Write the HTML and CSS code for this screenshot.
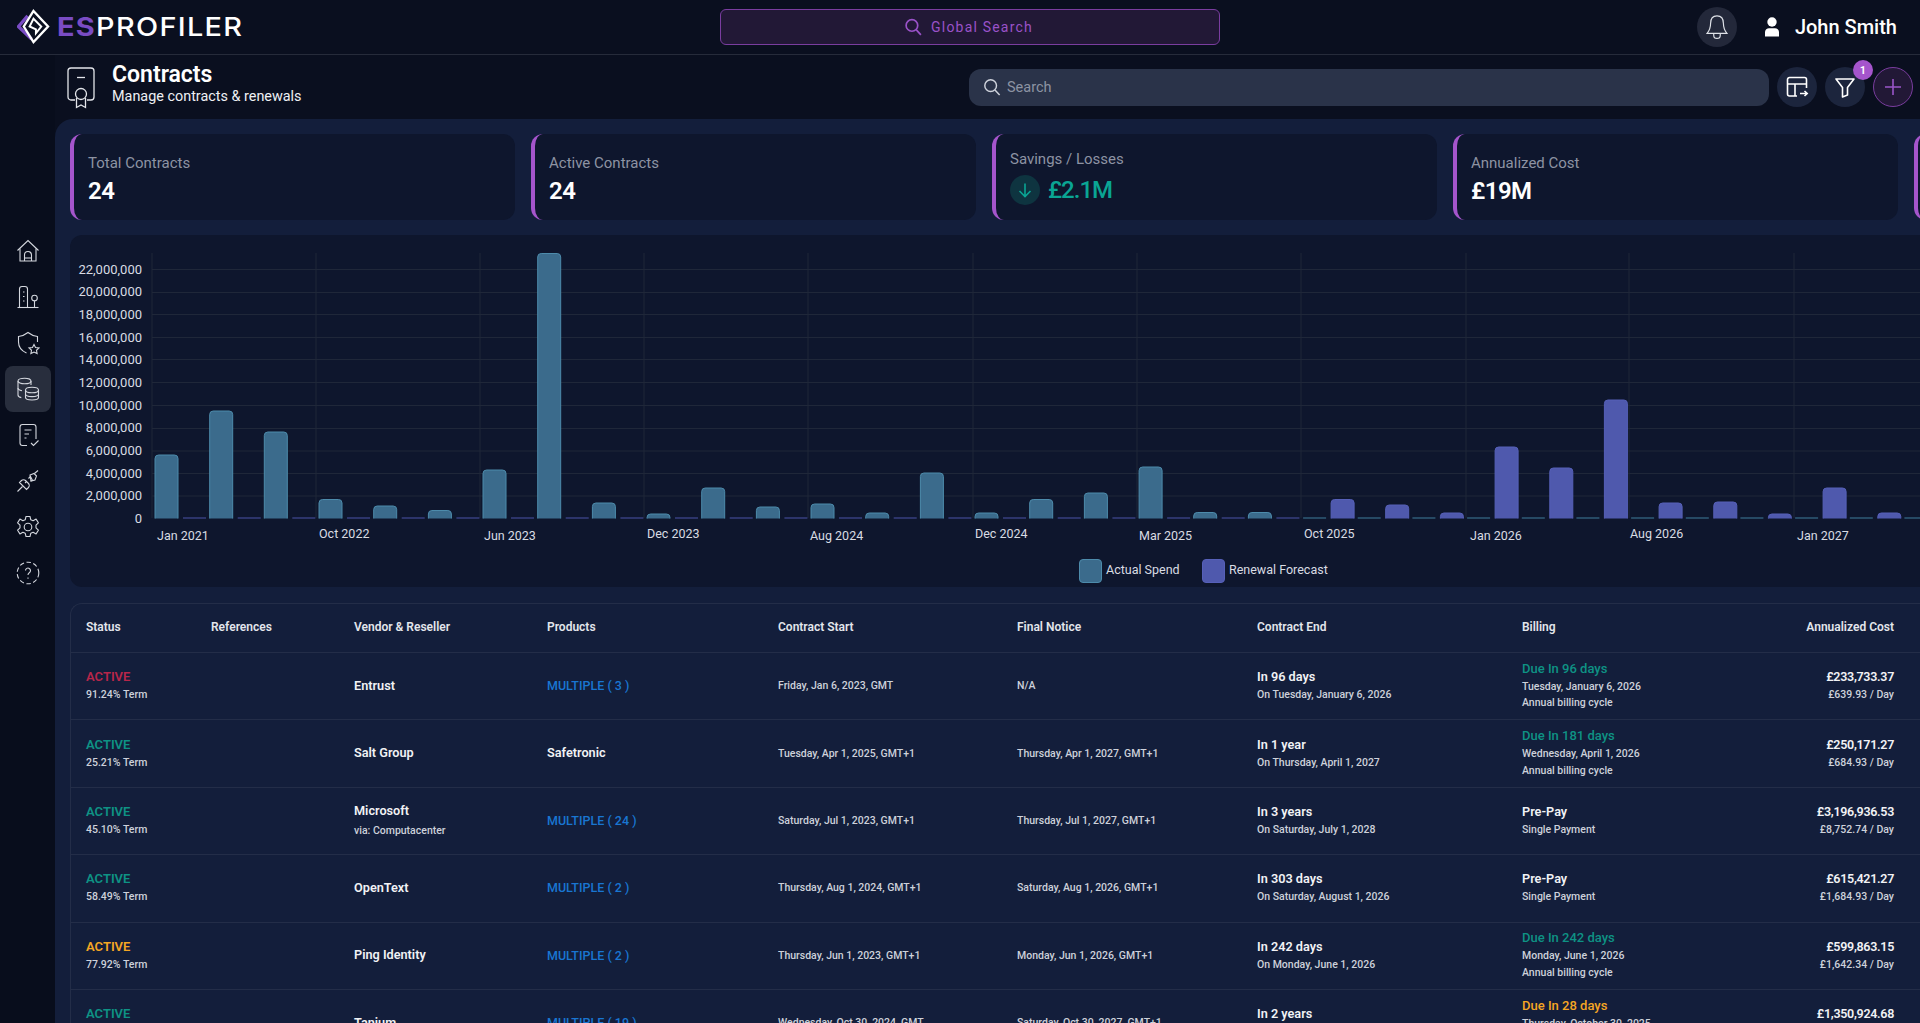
FILE: index.html
```html
<!DOCTYPE html>
<html lang="en">
<head>
<meta charset="utf-8">
<title>Contracts</title>
<link rel="stylesheet" href="styles.css">
</head>
<body>
<header class="topbar">
  <div class="brand">
    <svg class="brand-mark" viewBox="0 0 34 36" fill="none">
      <path d="M11 7 L1.500 18 L15 31" stroke="#7a4cc4" stroke-width="3.400" fill="none"/>
      <path d="M17 2 L32 18 L17 34 L7 18 Z" stroke="#fff" stroke-width="2.400" stroke-linejoin="miter"/>
      <path d="M17 10 L25 18 L19.500 25 V21 L13 18 Z" stroke="#fff" stroke-width="2"/>
    </svg>
    <span class="brand-name"><span class="brand-es">ES</span>PROFILER</span>
  </div>
  <div class="global-search">
    <svg class="gs-icon" viewBox="0 0 18 18" fill="none" stroke="currentColor" stroke-width="1.600"><circle cx="7.500" cy="7.500" r="5.500"/><path d="M11.500 11.500 L16 16.500"/></svg>
    <span>Global Search</span>
  </div>
  <div class="topbar-right">
    <div class="bell">
      <svg viewBox="0 0 24 24" width="28" height="28" fill="none" stroke="#dfe2e8" stroke-width="1"><path d="M12 2.500c-3.800 0-5.500 3-5.500 6.500 0 4-1 6-3 8.500h17c-2-2.500-3-4.500-3-8.500 0-3.500-1.700-6.500-5.500-6.500z"/><path d="M9.200 17.500v1.500a2.800 2.800 0 0 0 5.600 0v-1.500"/></svg>
    </div>
    <svg class="user-icon" viewBox="0 0 16 20" fill="#fff"><ellipse cx="8" cy="5" rx="4.700" ry="4.700"/><path d="M1 19.500v-4.500c0-2.500 2-3.800 4-3.800h6c2 0 4 1.300 4 3.800v4.500z"/></svg>
    <span class="user-name">John Smith</span>
  </div>
</header>

<div class="shell">
  <aside class="sidebar">
    <div class="nav-item">
      <svg viewBox="0 0 24 24"><path d="M1.500 11.500 L12 1.500 L22.500 11.500"/><path d="M4 9.500V22h16V9.500"/><path d="M8.500 22v-6a3.500 3.500 0 0 1 7 0v6"/><path d="M8.500 19h7"/></svg>
    </div>
    <div class="nav-item">
      <svg viewBox="0 0 24 24"><path d="M1.500 22.500h21"/><path d="M3.500 22.500V4a2.500 2.500 0 0 1 2.500-2.500h3A2.500 2.500 0 0 1 11.500 4v18.500"/><path d="M7 7h1.500M7 11.500h1.500M7 16h1.500"/><circle cx="18.500" cy="13" r="2.800"/><path d="M18.500 15.800v6.700"/></svg>
    </div>
    <div class="nav-item">
      <svg viewBox="0 0 24 24"><path d="M21.500 11V5.500C17.500 5 14.500 3.500 12 1.500 9.500 3.500 6.500 5 2.500 5.500V11c0 5 3.500 9 8 11"/><path d="M18 13.500l1.500 3 3.500.500-2.500 2.300.600 3.300-3.100-1.600-3.100 1.600.600-3.300-2.500-2.300 3.500-.500z"/></svg>
    </div>
    <div class="nav-item nav-active">
      <svg viewBox="0 0 24 24"><ellipse cx="8.500" cy="4" rx="6.500" ry="2.800"/><path d="M2 4v14c0 1.300 1.400 2.300 3.300 2.600"/><path d="M15 4v4"/><path d="M2 11c0 1.300 1.500 2.300 4 2.700"/><ellipse cx="16" cy="13" rx="6.500" ry="2.800"/><path d="M9.500 13v7.500c0 1.600 3 2.500 6.500 2.500s6.500-.9 6.500-2.500V13"/><path d="M9.500 17c0 1.500 3 2.600 6.500 2.600s6.500-1.100 6.500-2.600"/></svg>
    </div>
    <div class="nav-item">
      <svg viewBox="0 0 24 24"><path d="M11 22.500H6.500A2.500 2.500 0 0 1 4 20V4a2.500 2.500 0 0 1 2.500-2.500h11A2.500 2.500 0 0 1 20 4v12"/><path d="M8.500 7h7M8.500 11h4.500M8.500 15h2"/><path d="M15 20l2.500 2.500 5-5"/></svg>
    </div>
    <div class="nav-item">
      <svg viewBox="0 0 24 24"><path d="M1.500 22.500l5-5"/><path d="M3.500 13.500l7 7 2-2c1-1 1-3 0-4l-3-3c-1-1-3-1-4 0z"/><path d="M9 14l1.500-1.500"/><path d="M12.500 9.500l2-2 2 4-2 .500"/><path d="M14 6l4-1.500 2.500 2.500-1.500 4-4 1z"/><path d="M18.500 4.500L22 1.500"/></svg>
    </div>
    <div class="nav-item">
      <svg viewBox="0 0 24 24"><circle cx="12" cy="12" r="3.800"/><path d="M10 1.500h4l.8 3.300 2.300 1 3-1.700 2.300 3.700-2.400 2.400v2.600l2.400 2.400-2.300 3.700-3-1.700-2.300 1-.8 3.300h-4l-.8-3.300-2.300-1-3 1.700-2.300-3.700 2.400-2.400v-2.600L1.600 7.800l2.300-3.700 3 1.700 2.300-1z" stroke-linejoin="round"/></svg>
    </div>
    <div class="nav-item">
      <svg viewBox="0 0 24 24"><circle cx="12" cy="12" r="10.800" stroke-dasharray="4.500 2.500"/><path d="M9.500 9.500a2.500 2.500 0 1 1 3.800 2.200c-.9.600-1.300 1.100-1.300 2.300"/><path d="M12 16.500v1.200"/></svg>
    </div>
  </aside>

  <div class="content">
    <section class="page-head">
      <svg class="page-icon" viewBox="0 0 28 42" fill="none" stroke="#e3e5ea" stroke-width="1.300">
        <path d="M8 33H4a3 3 0 0 1-3-3V4a3 3 0 0 1 3-3h20a3 3 0 0 1 3 3v26a3 3 0 0 1-3 3h-4"/>
        <path d="M10 10.500h8"/>
        <circle cx="14" cy="27" r="5.500"/>
        <path d="M9.500 31v9.500l4.500-2.500 4.500 2.500V31"/>
      </svg>
      <div class="page-title">
        <h1>Contracts</h1>
        <p>Manage contracts &amp; renewals</p>
      </div>
      <div class="tools">
        <div class="search">
          <svg viewBox="0 0 20 20" fill="none" stroke="#cfd3dc" stroke-width="1.600"><circle cx="8.500" cy="8.500" r="6.500"/><path d="M13.300 13.300L18.500 19"/></svg>
          <span>Search</span>
        </div>
        <div class="round-btn">
          <svg viewBox="0 0 24 24" width="24" height="24" fill="none" stroke="#fff" stroke-width="1.600"><path d="M12 21H4.500A2 2 0 0 1 2.500 19V4.500a2 2 0 0 1 2-2h15a2 2 0 0 1 2 2V13"/><path d="M2.500 9h19M10 9v12"/><path d="M15 18.500h7M19.500 16l2.700 2.500-2.700 2.500"/></svg>
        </div>
        <div class="round-btn filter-btn">
          <svg viewBox="0 0 24 24" width="24" height="24" fill="none" stroke="#fff" stroke-width="1.600"><path d="M3 4h18l-6.500 8.500V20l-5 2v-9.500z" stroke-linejoin="round"/></svg>
          <span class="badge">1</span>
        </div>
        <div class="round-btn add-btn">
          <svg viewBox="0 0 20 20" width="20" height="20" fill="none" stroke="#9a55c9" stroke-width="1.600"><path d="M10 2v16M2 10h16"/></svg>
        </div>
      </div>
    </section>

    <main class="panel">
      <section class="stats">
        <div class="stat"><div class="stat-label">Total Contracts</div><div class="stat-value">24</div></div>
        <div class="stat"><div class="stat-label">Active Contracts</div><div class="stat-value">24</div></div>
        <div class="stat stat-raised">
          <div class="stat-label">Savings / Losses</div>
          <div class="stat-value stat-good">
            <span class="arrow"><svg viewBox="0 0 16 16" width="16" height="16" fill="none" stroke="#0aa594" stroke-width="1.600"><path d="M8 1.500v13M2.500 9L8 14.500 13.500 9"/></svg></span>£2.1M
          </div>
        </div>
        <div class="stat"><div class="stat-label">Annualized Cost</div><div class="stat-value">£19M</div></div>
        <div class="stat"></div>
      </section>

      <section class="chart-card">
        <svg class="chart" viewBox="70 235 1850 352" width="1850" height="352">
          <defs><clipPath id="plot"><rect x="70" y="235" width="1850" height="283.500"/></clipPath></defs>
          <g class="grid">
            <path d="M152 253V518M316 253V518M480 253V518M644 253V518M808 253V518M973 253V518M1137 253V518M1301 253V518M1466 253V518M1629 253V518M1794 253V518"/>
            <path d="M152 269.500H1920M152 292.500H1920M152 314.500H1920M152 337.500H1920M152 359.500H1920M152 382.500H1920M152 405.500H1920M152 428.500H1920M152 451H1920M152 473.500H1920M152 496H1920"/>
          </g>
          <g class="axis-y">
            <text x="142" y="273.500">22,000,000</text><text x="142" y="296">20,000,000</text><text x="142" y="319">18,000,000</text><text x="142" y="341.500">16,000,000</text><text x="142" y="364">14,000,000</text><text x="142" y="387">12,000,000</text><text x="142" y="409.500">10,000,000</text><text x="142" y="432">8,000,000</text><text x="142" y="455">6,000,000</text><text x="142" y="477.500">4,000,000</text><text x="142" y="500">2,000,000</text><text x="142" y="523">0</text>
          </g>
          <g class="axis-x">
            <text x="157" y="540">Jan 2021</text><text x="319" y="538">Oct 2022</text><text x="484" y="540">Jun 2023</text><text x="647" y="538">Dec 2023</text><text x="810" y="540">Aug 2024</text><text x="975" y="538">Dec 2024</text><text x="1139" y="540">Mar 2025</text><text x="1304" y="538">Oct 2025</text><text x="1470" y="540">Jan 2026</text><text x="1630" y="538">Aug 2026</text><text x="1797" y="540">Jan 2027</text>
          </g>
          <g clip-path="url(#plot)">
            <g class="bar-actual">
              <rect x="155" y="455" width="23" height="70" rx="3.500"/><rect x="209.700" y="411" width="23" height="114" rx="3.500"/><rect x="264.300" y="432" width="23" height="93" rx="3.500"/><rect x="319" y="499.500" width="23" height="26" rx="3.500"/><rect x="373.700" y="506" width="23" height="19" rx="3.500"/><rect x="428.400" y="510.500" width="23" height="14" rx="3.500"/><rect x="483" y="470" width="23" height="55" rx="3.500"/><rect x="537.700" y="253.500" width="23" height="272" rx="3.500"/><rect x="592.400" y="503" width="23" height="22" rx="3.500"/><rect x="647" y="514" width="23" height="11" rx="3.500"/><rect x="701.700" y="488" width="23" height="37" rx="3.500"/><rect x="756.400" y="507" width="23" height="18" rx="3.500"/><rect x="811" y="504" width="23" height="21" rx="3.500"/><rect x="865.700" y="513" width="23" height="12" rx="3.500"/><rect x="920.400" y="473" width="23" height="52" rx="3.500"/><rect x="975" y="513" width="23" height="12" rx="3.500"/><rect x="1029.700" y="499.500" width="23" height="26" rx="3.500"/><rect x="1084.400" y="493" width="23" height="32" rx="3.500"/><rect x="1139.100" y="467" width="23" height="58" rx="3.500"/><rect x="1193.700" y="512.500" width="23" height="12" rx="3.500"/><rect x="1248.400" y="512.500" width="23" height="12" rx="3.500"/>
            </g>
            <g class="tiny-actual">
              <rect x="1303.100" y="517.500" width="23" height="2"/><rect x="1357.700" y="517.500" width="23" height="2"/><rect x="1412.400" y="517.500" width="23" height="2"/><rect x="1467.100" y="517.500" width="23" height="2"/><rect x="1521.800" y="517.500" width="23" height="2"/><rect x="1576.400" y="517.500" width="23" height="2"/><rect x="1631.100" y="517.500" width="23" height="2"/><rect x="1685.800" y="517.500" width="23" height="2"/><rect x="1740.400" y="517.500" width="23" height="2"/><rect x="1795.100" y="517.500" width="23" height="2"/><rect x="1849.800" y="517.500" width="23" height="2"/><rect x="1904.400" y="517.500" width="23" height="2"/>
            </g>
            <g class="tiny-forecast">
              <rect x="183" y="517.500" width="23" height="2"/><rect x="237.700" y="517.500" width="23" height="2"/><rect x="292.300" y="517.500" width="23" height="2"/><rect x="347" y="517.500" width="23" height="2"/><rect x="401.700" y="517.500" width="23" height="2"/><rect x="456.400" y="517.500" width="23" height="2"/><rect x="511" y="517.500" width="23" height="2"/><rect x="565.700" y="517.500" width="23" height="2"/><rect x="620.400" y="517.500" width="23" height="2"/><rect x="675" y="517.500" width="23" height="2"/><rect x="729.700" y="517.500" width="23" height="2"/><rect x="784.400" y="517.500" width="23" height="2"/><rect x="839" y="517.500" width="23" height="2"/><rect x="893.700" y="517.500" width="23" height="2"/><rect x="948.400" y="517.500" width="23" height="2"/><rect x="1003" y="517.500" width="23" height="2"/><rect x="1057.700" y="517.500" width="23" height="2"/><rect x="1112.400" y="517.500" width="23" height="2"/><rect x="1167.100" y="517.500" width="23" height="2"/><rect x="1221.700" y="517.500" width="23" height="2"/><rect x="1276.400" y="517.500" width="23" height="2"/>
            </g>
            <g class="bar-forecast">
              <rect x="1331.100" y="499.500" width="23" height="26" rx="3.500"/><rect x="1385.700" y="505" width="23" height="20" rx="3.500"/><rect x="1440.400" y="513" width="23" height="12" rx="3.500"/><rect x="1495.100" y="447" width="23" height="78" rx="3.500"/><rect x="1549.800" y="468" width="23" height="57" rx="3.500"/><rect x="1604.400" y="400" width="23" height="125" rx="3.500"/><rect x="1659.100" y="503" width="23" height="22" rx="3.500"/><rect x="1713.800" y="502" width="23" height="23" rx="3.500"/><rect x="1768.400" y="514" width="23" height="11" rx="3.500"/><rect x="1823.100" y="488" width="23" height="37" rx="3.500"/><rect x="1877.800" y="513" width="23" height="12" rx="3.500"/>
            </g>
          </g>
          <g class="legend">
            <rect class="swatch-actual" x="1079.500" y="559.500" width="22" height="23" rx="3.500"/>
            <text x="1106" y="574">Actual Spend</text>
            <rect class="swatch-forecast" x="1202.500" y="559.500" width="22" height="23" rx="3.500"/>
            <text x="1229" y="574">Renewal Forecast</text>
          </g>
        </svg>
      </section>

      <section class="table">
        <div class="row row-head">
          <div>Status</div><div>References</div><div>Vendor &amp; Reseller</div><div>Products</div><div>Contract Start</div><div>Final Notice</div><div>Contract End</div><div>Billing</div><div class="num">Annualized Cost</div>
        </div>

        <div class="row">
          <div><div class="status red">ACTIVE</div><div class="sub">91.24% Term</div></div>
          <div></div>
          <div class="strong">Entrust</div>
          <div class="link">MULTIPLE ( 3 )</div>
          <div class="date">Friday, Jan 6, 2023, GMT</div>
          <div class="date">N/A</div>
          <div><div class="strong">In 96 days</div><div class="sub">On Tuesday, January 6, 2026</div></div>
          <div class="billing"><div class="due teal">Due In 96 days</div><div class="sub">Tuesday, January 6, 2026</div><div class="sub">Annual billing cycle</div></div>
          <div class="num"><div class="strong cost">£233,733.37</div><div class="sub">£639.93 / Day</div></div>
        </div>

        <div class="row">
          <div><div class="status teal">ACTIVE</div><div class="sub">25.21% Term</div></div>
          <div></div>
          <div class="strong">Salt Group</div>
          <div class="strong">Safetronic</div>
          <div class="date">Tuesday, Apr 1, 2025, GMT+1</div>
          <div class="date">Thursday, Apr 1, 2027, GMT+1</div>
          <div><div class="strong">In 1 year</div><div class="sub">On Thursday, April 1, 2027</div></div>
          <div class="billing"><div class="due teal">Due In 181 days</div><div class="sub">Wednesday, April 1, 2026</div><div class="sub">Annual billing cycle</div></div>
          <div class="num"><div class="strong cost">£250,171.27</div><div class="sub">£684.93 / Day</div></div>
        </div>

        <div class="row">
          <div><div class="status teal">ACTIVE</div><div class="sub">45.10% Term</div></div>
          <div></div>
          <div class="vendor"><div class="strong">Microsoft</div><div class="sub">via: Computacenter</div></div>
          <div class="link">MULTIPLE ( 24 )</div>
          <div class="date">Saturday, Jul 1, 2023, GMT+1</div>
          <div class="date">Thursday, Jul 1, 2027, GMT+1</div>
          <div><div class="strong">In 3 years</div><div class="sub">On Saturday, July 1, 2028</div></div>
          <div><div class="strong">Pre-Pay</div><div class="sub">Single Payment</div></div>
          <div class="num"><div class="strong cost">£3,196,936.53</div><div class="sub">£8,752.74 / Day</div></div>
        </div>

        <div class="row">
          <div><div class="status teal">ACTIVE</div><div class="sub">58.49% Term</div></div>
          <div></div>
          <div class="strong">OpenText</div>
          <div class="link">MULTIPLE ( 2 )</div>
          <div class="date">Thursday, Aug 1, 2024, GMT+1</div>
          <div class="date">Saturday, Aug 1, 2026, GMT+1</div>
          <div><div class="strong">In 303 days</div><div class="sub">On Saturday, August 1, 2026</div></div>
          <div><div class="strong">Pre-Pay</div><div class="sub">Single Payment</div></div>
          <div class="num"><div class="strong cost">£615,421.27</div><div class="sub">£1,684.93 / Day</div></div>
        </div>

        <div class="row">
          <div><div class="status amber">ACTIVE</div><div class="sub">77.92% Term</div></div>
          <div></div>
          <div class="strong">Ping Identity</div>
          <div class="link">MULTIPLE ( 2 )</div>
          <div class="date">Thursday, Jun 1, 2023, GMT+1</div>
          <div class="date">Monday, Jun 1, 2026, GMT+1</div>
          <div><div class="strong">In 242 days</div><div class="sub">On Monday, June 1, 2026</div></div>
          <div class="billing"><div class="due teal">Due In 242 days</div><div class="sub">Monday, June 1, 2026</div><div class="sub">Annual billing cycle</div></div>
          <div class="num"><div class="strong cost">£599,863.15</div><div class="sub">£1,642.34 / Day</div></div>
        </div>

        <div class="row">
          <div><div class="status teal">ACTIVE</div><div class="sub">61.10% Term</div></div>
          <div></div>
          <div class="strong">Tanium</div>
          <div class="link">MULTIPLE ( 19 )</div>
          <div class="date">Wednesday, Oct 30, 2024, GMT</div>
          <div class="date">Saturday, Oct 30, 2027, GMT+1</div>
          <div><div class="strong">In 2 years</div><div class="sub">On Saturday, October 30, 2027</div></div>
          <div class="billing"><div class="due amber">Due In 28 days</div><div class="sub">Thursday, October 30, 2025</div><div class="sub">Annual billing cycle</div></div>
          <div class="num"><div class="strong cost">£1,350,924.68</div><div class="sub">£3,701.17 / Day</div></div>
        </div>
      </section>
    </main>
  </div>
</div>
</body>
</html>
```

FILE: styles.css
```css
* { box-sizing: border-box; }
html, body { margin: 0; height: 100%; overflow: hidden; }
body {
  display: flex;
  flex-direction: column;
  background: #0a0f1f;
  color: #fff;
  font-family: Roboto, "Open Sans", sans-serif;
}
p, h1 { margin: 0; }

/* top bar */
.topbar {
  flex: none;
  height: 55px;
  display: flex;
  align-items: center;
  border-bottom: 1px solid #262b3a;
  padding: 0 23px 1px 17px;
}
.brand { display: flex; align-items: center; gap: 7px; width: 703px; }
.brand-mark { width: 33px; height: 35px; flex: none; }
.brand-name {
  font-family: Inter, sans-serif;
  font-size: 26px;
  font-weight: 500;
  letter-spacing: 1.2px;
  line-height: 30px;
  transform: scaleX(1.11);
  transform-origin: left center;
}
.brand-es { color: #7a4cc4; font-weight: 700; }
.global-search {
  width: 500px;
  height: 36px;
  display: flex;
  align-items: center;
  justify-content: center;
  gap: 8px;
  padding-right: 3px;
  background: #221836;
  border: 1px solid #7a3d9f;
  border-radius: 6px;
  color: #9a52c8;
  font-size: 14px;
  letter-spacing: 1.2px;
}
.gs-icon { width: 19px; height: 20px; }
.topbar-right { margin-left: auto; display: flex; align-items: center; }
.bell {
  width: 40px;
  height: 40px;
  border-radius: 50%;
  background: #23283a;
  display: flex;
  align-items: center;
  justify-content: center;
}
.user-icon { width: 16px; height: 20px; margin-left: 27px; }
.user-name { margin-left: 15px; font-size: 20px; font-weight: 500; line-height: 24px; }

/* shell */
.shell { flex: 1; min-height: 0; display: flex; }
.sidebar {
  flex: none;
  width: 55px;
  padding: 173px 0 0 5px;
  background: #080d1c;
  display: flex;
  flex-direction: column;
}
.nav-item {
  width: 46px;
  height: 46px;
  display: flex;
  align-items: center;
  justify-content: center;
  border-radius: 8px;
}
.nav-item svg {
  width: 24px;
  height: 24px;
  fill: none;
  stroke: #d4d7de;
  stroke-width: 1.1;
}
.nav-active { background: #282e3d; }
.content { flex: 1; min-width: 0; display: flex; flex-direction: column; }

/* page head */
.page-head {
  flex: none;
  height: 64px;
  display: flex;
  align-items: center;
  padding: 0 7px 0 12px;
}
.page-icon { width: 28px; height: 42px; flex: none; margin-top: 2px; }
.page-title { margin: 0 0 8px 17px; }
.page-title h1 { font-size: 23px; font-weight: 600; line-height: 27px; }
.page-title p { font-size: 14.400px; line-height: 18px; color: #eef0f4; }
.tools { margin-left: auto; display: flex; align-items: center; gap: 8px; }
.search {
  width: 800px;
  height: 37px;
  display: flex;
  align-items: center;
  gap: 6px;
  padding-left: 14px;
  background: #2a3349;
  border-radius: 12px;
  color: #8d93a3;
  font-size: 14.500px;
}
.search svg { width: 18px; height: 20px; }
.round-btn {
  width: 40px;
  height: 40px;
  border-radius: 50%;
  background: #1c253d;
  display: flex;
  align-items: center;
  justify-content: center;
  position: relative;
}
.add-btn { background: #221836; border: 1px solid #7a3d9f; }
.badge {
  position: absolute;
  top: -7px;
  right: -8px;
  width: 20px;
  height: 20px;
  border-radius: 50%;
  background: #a555cc;
  color: #fff;
  font-size: 11px;
  font-weight: 600;
  display: flex;
  align-items: center;
  justify-content: center;
}

/* panel */
.panel {
  flex: 1;
  min-height: 0;
  overflow: hidden;
  background: #131e3b;
  border-top-left-radius: 18px;
  padding: 15px 0 0 15px;
}
.stats { display: flex; gap: 16px; height: 86px; }
.stat {
  flex: none;
  width: 445px;
  background: #0e162d;
  border-left: 4px solid #a555cc;
  border-radius: 12px;
  padding: 20px 0 0 14px;
}
.stat-raised { padding-top: 16px; }
.stat-label { font-size: 15px; line-height: 18px; color: #8d93a3; }
.stat-value {
  margin-top: 5px;
  font-size: 24px;
  font-weight: 600;
  line-height: 28px;
  letter-spacing: -.5px;
  display: flex;
  align-items: center;
}
.stat-raised .stat-value { margin-top: 7px; }
.stat-good { color: #0aa594; font-weight: 500; letter-spacing: -1px; }
.arrow {
  width: 30px;
  height: 30px;
  border-radius: 50%;
  background: #0e3440;
  display: flex;
  align-items: center;
  justify-content: center;
  margin-right: 8px;
}

/* chart */
.chart-card {
  margin-top: 15px;
  height: 352px;
  background: #0e162d;
  border-radius: 12px 0 0 12px;
  overflow: hidden;
}
.chart { display: block; }
.grid path { stroke: #1f2739; stroke-width: 1; fill: none; }
.axis-y text { text-anchor: end; font-size: 13px; fill: #d9dce3; }
.axis-x text { font-size: 12.500px; fill: #d9dce3; }
.legend text { font-size: 12.500px; fill: #d9dce3; }
.bar-actual rect, .swatch-actual { fill: #3b6b8c; stroke: #4d8bab; stroke-width: 1; }
.bar-forecast rect, .swatch-forecast { fill: #4f59ad; stroke: #5660b8; stroke-width: 1; }
.tiny-actual rect { fill: #3f7c9c; }
.tiny-forecast rect { fill: #4a52a8; }

/* table */
.table {
  margin-top: 16px;
  background: #131e3b;
  border: 1px solid #232d48;
  border-right: 0;
  border-bottom: 0;
  border-top-left-radius: 12px;
}
.row {
  display: grid;
  grid-template-columns: 125px 143px 193px 231px 239px 240px 265px 1fr auto;
  align-items: center;
  height: 67.400px;
  padding: 0 26px 1px 15px;
  border-bottom: 1px solid #232d48;
  font-size: 11px;
  color: #d9dce3;
}
.row-head {
  height: 49px;
  padding-bottom: 2px;
  font-size: 12px;
  font-weight: 600;
  color: #e3e6ec;
}
.num { text-align: right; }
.strong { font-size: 12.700px; font-weight: 600; line-height: 18px; color: #f1f2f5; }
.cost { font-size: 12.500px; letter-spacing: -.3px; }
.sub { font-size: 10.500px; font-weight: 500; line-height: 16px; margin-top: 1px; color: #cdd1da; }
.status { font-size: 13px; font-weight: 600; line-height: 18px; }
.vendor .sub { margin-top: 3px; }
.link { font-size: 12.500px; font-weight: 500; color: #1976d2; }
.date { font-size: 10.500px; font-weight: 500; color: #cdd1da; }
.due { font-size: 13px; font-weight: 500; line-height: 18px; margin-bottom: 1px; }
.billing .sub { margin-top: 0; line-height: 16.500px; }
.red { color: #b8264a; }
.teal { color: #0e9284; }
.amber { color: #f5a623; }
```
